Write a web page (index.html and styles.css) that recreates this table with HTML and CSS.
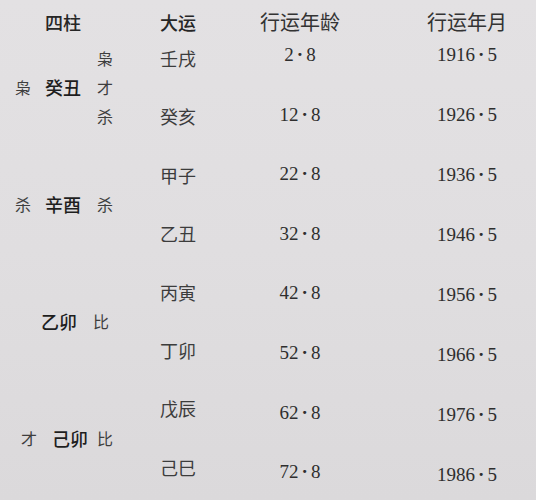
FILE: index.html
```html
<!DOCTYPE html>
<html lang="zh">
<head>
<meta charset="utf-8">
<link rel="stylesheet" href="styles.css">
</head>
<body>
<div class="page">
  <div class="col col-pillars">
    <div class="head head-pillars">四柱</div>
    <div class="pillar-grid">
      <div class="line r1"><span class="lab"></span><span class="pil"></span><span class="lab">枭</span></div>
      <div class="line r12"><span class="lab">枭</span><span class="pil">癸丑</span><span class="lab">才</span></div>
      <div class="line r2"><span class="lab"></span><span class="pil"></span><span class="lab">杀</span></div>
      <div class="line r34"><span class="lab">杀</span><span class="pil">辛酉</span><span class="lab">杀</span></div>
      <div class="line r56 shift-l"><span class="lab"></span><span class="pil">乙卯</span><span class="lab">比</span></div>
      <div class="line r78 shift-r"><span class="lab">才</span><span class="pil narrow">己卯</span><span class="lab">比</span></div>
    </div>
  </div>
  <div class="col col-dayun">
    <div class="head head-dayun">大运</div>
    <div class="cell dy">壬戌</div>
    <div class="cell dy">癸亥</div>
    <div class="cell dy">甲子</div>
    <div class="cell dy">乙丑</div>
    <div class="cell dy">丙寅</div>
    <div class="cell dy">丁卯</div>
    <div class="cell dy">戊辰</div>
    <div class="cell dy">己巳</div>
  </div>
  <div class="col col-age">
    <div class="head head-num">行运年龄</div>
    <div class="cell num">2<span class="dot">·</span>8</div>
    <div class="cell num">12<span class="dot">·</span>8</div>
    <div class="cell num">22<span class="dot">·</span>8</div>
    <div class="cell num">32<span class="dot">·</span>8</div>
    <div class="cell num">42<span class="dot">·</span>8</div>
    <div class="cell num">52<span class="dot">·</span>8</div>
    <div class="cell num">62<span class="dot">·</span>8</div>
    <div class="cell num">72<span class="dot">·</span>8</div>
  </div>
  <div class="col col-year">
    <div class="head head-year">行运年月</div>
    <div class="cell yr">1916<span class="dot">·</span>5</div>
    <div class="cell yr">1926<span class="dot">·</span>5</div>
    <div class="cell yr">1936<span class="dot">·</span>5</div>
    <div class="cell yr">1946<span class="dot">·</span>5</div>
    <div class="cell yr">1956<span class="dot">·</span>5</div>
    <div class="cell yr">1966<span class="dot">·</span>5</div>
    <div class="cell yr">1976<span class="dot">·</span>5</div>
    <div class="cell yr">1986<span class="dot">·</span>5</div>
  </div>
</div>
</body>
</html>
```
FILE: styles.css
```css
html, body {
  margin: 0;
  padding: 0;
}
body {
  width: 536px;
  height: 500px;
  overflow: hidden;
  background: linear-gradient(180deg, #e3e1e3 0%, #e0dee0 50%, #dbd9db 100%);
  font-family: "Noto Sans CJK SC", "Noto Sans", sans-serif;
  color: #333;
}
.page {
  display: flex;
  flex-direction: row;
  align-items: flex-start;
  padding-top: 12px;
}
.col {
  display: flex;
  flex-direction: column;
}
.head {
  line-height: 20px;
  white-space: nowrap;
}
.head-pillars {
  height: 16.8px;
  padding-left: 45px;
  font-size: 18px;
  font-weight: 500;
  color: #262626;
}
.head-dayun {
  height: 16.8px;
  font-size: 18px;
  font-weight: 500;
  color: #262626;
}
.head-num {
  height: 13.2px;
  font-size: 20px;
  font-weight: 400;
  color: #333;
}
.head-year {
  height: 13px;
  font-size: 20px;
  font-weight: 400;
  color: #333;
}

/* pillars */
.col-pillars {
  width: 160px;
}
.pillar-grid {
  display: grid;
  grid-template-rows: repeat(8, 58.4px);
}
.line {
  grid-column: 1;
  display: flex;
  align-items: center;
  padding-left: 15px;
  line-height: 20px;
  white-space: nowrap;
}
.r1 { grid-row: 1; }
.r12 { grid-row: 1 / 3; }
.r2 { grid-row: 2; }
.r34 { grid-row: 3 / 5; }
.r56 { grid-row: 5 / 7; }
.r78 { grid-row: 7 / 9; }
.shift-l { padding-left: 11px; }
.shift-r { padding-left: 21px; }
.lab {
  width: 30px;
  font-size: 16px;
  font-weight: 400;
  color: #3e3e3e;
}
.lab:last-child {
  width: auto;
}
.pil {
  width: 52px;
  font-size: 18px;
  font-weight: 500;
  color: #1e1e1e;
}
.pil.narrow {
  width: 45px;
}
.shift-r .lab:first-child {
  width: 31px;
}

/* cells */
.cell {
  display: flex;
  align-items: center;
  white-space: nowrap;
}
.col-dayun {
  width: 90px;
}
.dy {
  height: 58.4px;
  font-size: 18px;
  font-weight: 400;
  color: #3c3c3c;
}
.col-age {
  width: 100px;
  align-items: center;
  text-align: center;
}
.col-year {
  width: 100px;
  margin-left: 67px;
  align-items: center;
  text-align: center;
}
.num, .yr {
  font-family: "Liberation Serif", "Times New Roman", serif;
  font-size: 19px;
  color: #2e2e2e;
  justify-content: center;
}
.num { height: 59.6px; }
.yr { height: 60px; }
.dot {
  margin: 0 3px;
  font-weight: 700;
}
```
